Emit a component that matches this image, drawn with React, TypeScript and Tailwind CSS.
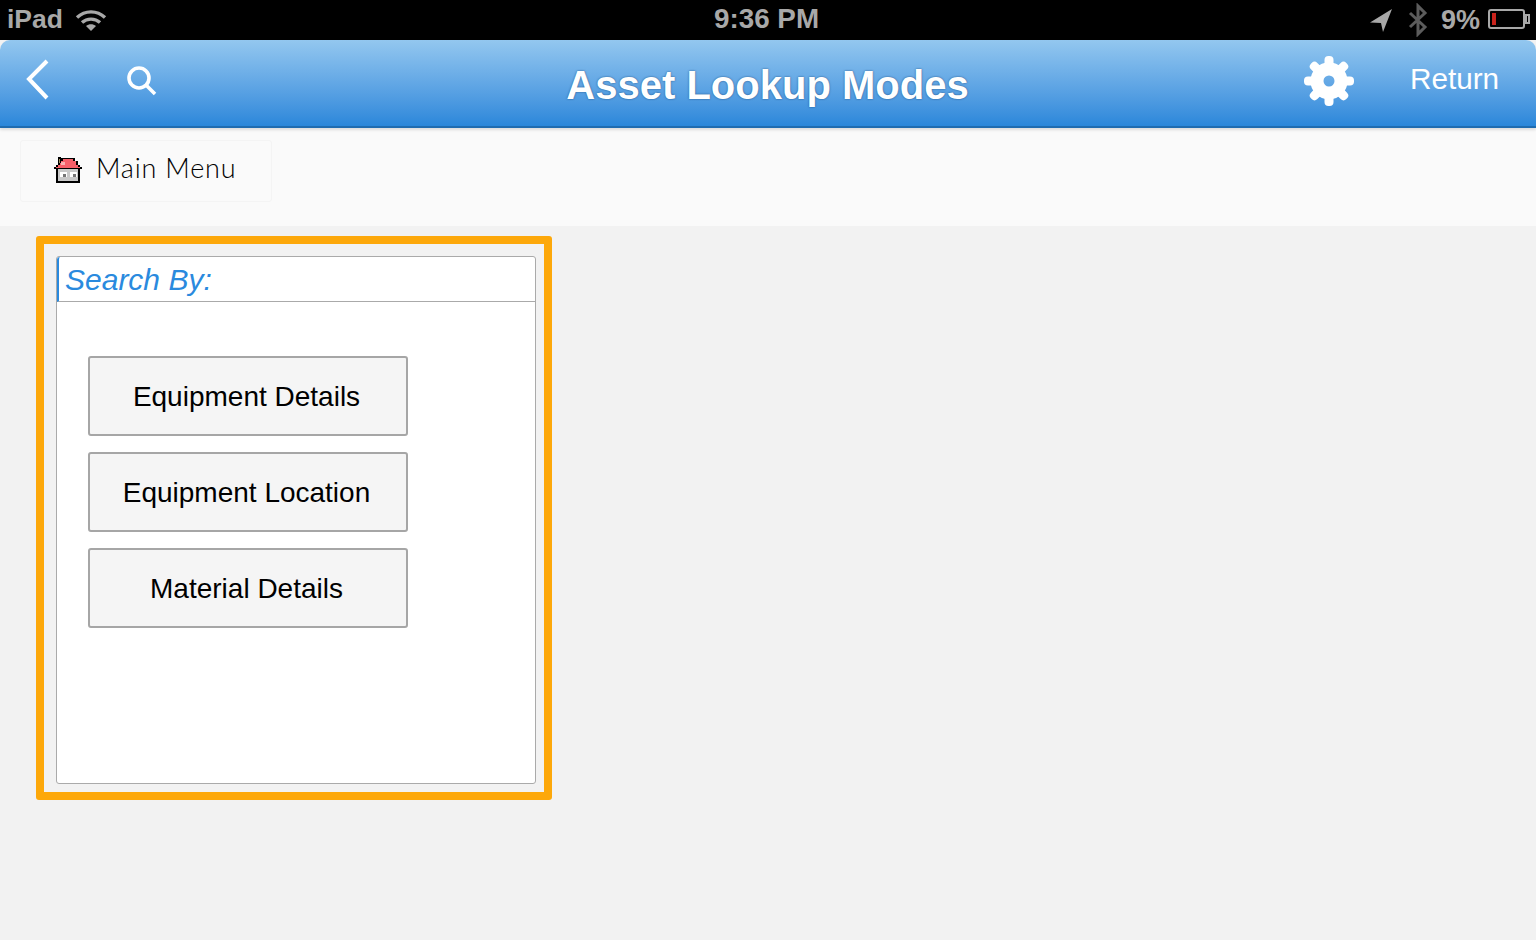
import React from 'react';

const SANS = { fontFamily: '"Liberation Sans", Arial, sans-serif' };

function WifiIcon() {
  return (
    <svg width="32" height="24" viewBox="0 0 32 24" fill="none" stroke="#a8a8a8" strokeWidth="3.4">
      <path d="M2 9.5C10 2 22 2 30 9.5" />
      <path d="M7 14.5C12 10 20 10 25 14.5" />
      <path d="M16 23l-5-5c3-2.4 7-2.4 10 0z" fill="#a8a8a8" stroke="none" />
    </svg>
  );
}

function GearIcon() {
  const teeth = [0, 45, 90, 135, 180, 225, 270, 315];
  return (
    <svg width="52" height="52" viewBox="0 0 52 52">
      {teeth.map(a => (
        <rect key={a} x="21.5" y="1" width="9" height="12" rx="4" fill="#fff" transform={`rotate(${a} 26 26)`} />
      ))}
      <circle cx="26" cy="26" r="12" fill="none" stroke="#fff" strokeWidth="13" />
    </svg>
  );
}

function HouseIcon() {
  return (
    <svg width="28" height="26" viewBox="0 0 28 26" shapeRendering="crispEdges">
      <path d="M2 12h24v14H2z" fill="#000" />
      <path d="M4 12h20v12H4z" fill="#c9c9c9" />
      <path d="M0 10h28v2H0zM2 8h24v2H2zM4 4h20v4H4zM7 1h14v3H7z" fill="#000" />
      <path d="M2 10h24v1H2zM4 8h20v2H4zM6 4h16v4H6zM9 2h10v2H9z" fill="#f6606a" />
      <path d="M7 5h4v3H7z" fill="#f9b0b0" />
      <path d="M4 0h3v6H4z" fill="#000" />
      <path d="M5 2h1v4H5z" fill="#a09060" />
      <path d="M6 15h7v5H6zM16 15h7v5h-7z" fill="#fff" />
      <path d="M9 17h3v3H9zM19 17h3v3h-3z" fill="#777" />
    </svg>
  );
}

function LookupButton({ label }: { label: string }) {
  return (
    <button className="w-[320px] h-20 bg-[#f5f5f5] border-2 border-[#a6a6a6] rounded-[3px] text-[28px] text-black flex items-center justify-center pr-[3px] pt-[1px]">
      {label}
    </button>
  );
}

export default function App() {
  return (
    <div className="w-[1536px] h-[940px] overflow-hidden flex flex-col bg-[#f2f2f2]" style={SANS}>
      <div className="h-10 bg-black flex items-center justify-between pl-[7px] pr-[6px] text-[#a8a8a8] font-bold relative">
        <div className="flex items-center gap-[12px]">
          <span className="text-[26.5px] leading-none -mt-[2px]">iPad</span>
          <WifiIcon />
        </div>
        <span className="absolute left-[714px] top-[3px] text-[27.8px] leading-[32px]">9:36 PM</span>
        <div className="flex items-center">
          <svg width="24" height="24" viewBox="0 0 24 24" fill="#a8a8a8" className="mr-[15px]">
            <path d="M23 1L1 14.5l11 .5 2 9z" />
          </svg>
          <svg width="20" height="34" viewBox="0 0 20 34" fill="none" stroke="#5c5c5c" strokeWidth="3" className="mr-[13px]">
            <path d="M2 10l15 14-7 7V3l7 7L2 24" />
          </svg>
          <span className="text-[27px] leading-none mr-2">9%</span>
          <svg width="42" height="24" viewBox="0 0 42 24">
            <rect x="1" y="2" width="35" height="18" rx="2" fill="none" stroke="#a8a8a8" strokeWidth="2" />
            <rect x="4" y="5" width="4" height="12" fill="#c9231c" />
            <path d="M38 7h3v8h-3z" fill="none" stroke="#a8a8a8" strokeWidth="2" />
          </svg>
        </div>
      </div>

      <div className="h-[88px] rounded-t-[10px] bg-gradient-to-b from-[#93c7ef] to-[#2a87da] border-b-2 border-[#1f6cb0] shadow-[0_2px_3px_rgba(0,0,0,0.12)] flex items-center relative z-10">
        <svg width="28" height="44" viewBox="0 0 28 44" fill="none" stroke="#fff" strokeWidth="4" className="absolute left-[25px] top-[18px]">
          <path d="M22 3L4 21l18 19" />
        </svg>
        <svg width="32" height="32" viewBox="0 0 32 32" fill="none" stroke="#fff" strokeWidth="3.6" className="absolute left-[125px] top-[24px]">
          <circle cx="14" cy="14" r="10" />
          <path d="M21 21l9 9" />
        </svg>
        <span className="absolute left-0 right-0 top-[21px] text-center pr-[1px] text-[40px] leading-[48px] font-bold text-white [text-shadow:0_0_2px_rgba(0,40,90,0.7)]">
          Asset Lookup Modes
        </span>
        <div className="absolute left-[1303px] top-[15px]"><GearIcon /></div>
        <span className="absolute left-[1410px] top-[20px] text-[29.7px] leading-[38px] text-white">Return</span>
      </div>

      <div className="h-[98px] bg-[#fafafa] pt-3 pl-5">
        <div className="w-[252px] h-[62px] border border-[#f4f4f4] rounded-[3px] flex items-center pl-[33px] gap-[14px]">
          <div className="-mt-[3px]"><HouseIcon /></div>
          <span className="text-[27px] font-light tracking-[0.8px] text-black -mt-[5px]" style={{ fontFamily: 'Lato, sans-serif' }}>Main Menu</span>
        </div>
      </div>

      <div className="pt-[10px] pl-9">
        <div className="w-[516px] h-[564px] border-[8px] border-[#fda80a] rounded-[3px] pt-3 pl-3 pr-2 pb-2">
          <div className="h-full bg-white border border-[#aaaaaa] rounded-[3px] flex flex-col">
            <div className="h-[45px] border-b border-[#aaaaaa] border-l-2 border-l-[#2a8ade] rounded-tl-[3px] pl-[6px] flex items-center text-[30px] italic text-[#2a8ade]">
              Search By:
            </div>
            <div className="flex flex-col gap-4 pl-[31px] pt-[54px]">
              <LookupButton label="Equipment Details" />
              <LookupButton label="Equipment Location" />
              <LookupButton label="Material Details" />
            </div>
          </div>
        </div>
      </div>
    </div>
  );
}
